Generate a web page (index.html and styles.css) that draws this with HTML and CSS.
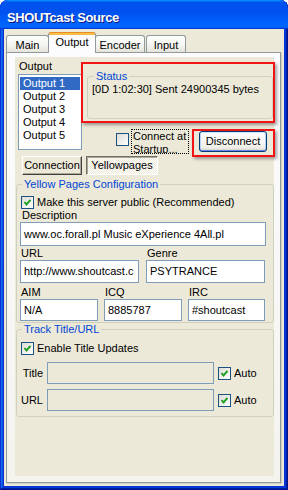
FILE: index.html
```html
<!DOCTYPE html>
<html lang="en">
<head>
    <meta charset="UTF-8">
    <meta name="viewport" content="width=device-width, initial-scale=1.0">
    <title>SHOUTcast Source</title>
    <link rel="stylesheet" href="styles.css">
</head>
<body>
    <div class="window">
        <div class="titlebar">SHOUTcast Source</div>

        <div class="client">
            <div class="tabs">
                <div class="tab tab-main">Main</div>
                <div class="tab tab-output active">Output</div>
                <div class="tab tab-encoder">Encoder</div>
                <div class="tab tab-input">Input</div>
            </div>

            <div class="pane">
                <div class="page">
                    <div class="top">
                        <div class="outputs">
                            <div class="out-label">Output</div>
                            <div class="listbox">
                                <div class="item selected">Output 1</div>
                                <div class="item">Output 2</div>
                                <div class="item">Output 3</div>
                                <div class="item">Output 4</div>
                                <div class="item">Output 5</div>
                            </div>
                        </div>

                        <div class="side">
                            <fieldset class="group status">
                                <legend>Status</legend>
                                <div class="status-text">[0D 1:02:30] Sent 24900345 bytes</div>
                            </fieldset>

                            <div class="connect-row">
                                <span class="check"></span>
                                <div class="focus-label">Connect at<br>Startup...</div>
                                <div class="button">Disconnect</div>
                            </div>
                        </div>
                    </div>

                    <div class="modes">
                        <div class="push">Connection</div>
                        <div class="push pressed">Yellowpages</div>
                    </div>

                    <fieldset class="group yp">
                        <legend>Yellow Pages Configuration</legend>
                        <div class="chk-row">
                            <span class="check on"><svg viewBox="0 0 11 11"><polyline points="2.5,5 4.5,7.5 8.5,2.8"/></svg></span>
                            <span>Make this server public (Recommended)</span>
                        </div>
                        <div class="lbl">Description</div>
                        <div class="edit desc">www.oc.forall.pl Music eXperience 4All.pl</div>

                        <div class="fields two">
                            <div class="field w119">
                                <div class="lbl">URL</div>
                                <div class="edit h23">http://www.shoutcast.c</div>
                            </div>
                            <div class="field w119">
                                <div class="lbl">Genre</div>
                                <div class="edit h23">PSYTRANCE</div>
                            </div>
                        </div>

                        <div class="fields three">
                            <div class="field w78">
                                <div class="lbl">AIM</div>
                                <div class="edit">N/A</div>
                            </div>
                            <div class="field w78">
                                <div class="lbl">ICQ</div>
                                <div class="edit">8885787</div>
                            </div>
                            <div class="field w77">
                                <div class="lbl">IRC</div>
                                <div class="edit">#shoutcast</div>
                            </div>
                        </div>
                    </fieldset>

                    <fieldset class="group track">
                        <legend>Track Title/URL</legend>
                        <div class="chk-row">
                            <span class="check on"><svg viewBox="0 0 11 11"><polyline points="2.5,5 4.5,7.5 8.5,2.8"/></svg></span>
                            <span>Enable Title Updates</span>
                        </div>

                        <div class="title-row">
                            <div class="row-label">Title</div>
                            <div class="edit disabled"></div>
                            <span class="check on"><svg viewBox="0 0 11 11"><polyline points="2.5,5 4.5,7.5 8.5,2.8"/></svg></span>
                            <span class="auto">Auto</span>
                        </div>
                        <div class="title-row second">
                            <div class="row-label">URL</div>
                            <div class="edit disabled"></div>
                            <span class="check on"><svg viewBox="0 0 11 11"><polyline points="2.5,5 4.5,7.5 8.5,2.8"/></svg></span>
                            <span class="auto">Auto</span>
                        </div>
                    </fieldset>

                    <!-- red highlight marks drawn over the dialog -->
                    <div class="mark mark-status"></div>
                    <div class="mark mark-disconnect"></div>
                </div>
            </div>
        </div>
    </div>
</body>
</html>
```

FILE: styles.css
```css
* {
    box-sizing: border-box;
}

body {
    margin: 0;
    background: #fff;
    font-family: "Liberation Sans", Arial, sans-serif;
    font-size: 11px;
    line-height: 13px;
    color: #000;
}

.window {
    width: 288px;
    height: 490px;
    background: #0831d9;
    border-radius: 8px 8px 0 0;
    box-shadow: inset -1px -1px #00138c, inset 1px 1px #0831d9,
                inset -2px -2px #001ea0, inset 2px 2px #166aee,
                inset -3px -3px #003bda, inset 3px 3px #0855dd;
    overflow: hidden;
}

.titlebar {
    height: 29px;
    padding: 10px 0 0 7px;
    line-height: 15px;
    font-size: 13px;
    font-weight: bold;
    letter-spacing: -0.4px;
    color: #fff;
    text-shadow: 1px 1px #0a1883;
    border-radius: 8px 8px 0 0;
    background: linear-gradient(180deg, #0997ff, #0053ee 8%, #0050ee 40%, #0066ff 88%, #0066ff 93%, #005bff 95%, #003dd7 96%, #003dd7);
}

.client {
    margin: 0 4px 4px;
    height: 457px;
    background: #ece9d8;
    padding-top: 3px;
}

/* tab strip */
.tabs {
    display: flex;
    align-items: flex-end;
    height: 20px;
}

.tab {
    position: relative;
    height: 17px;
    border: 1px solid #919b9c;
    border-bottom: 0;
    border-radius: 3px 3px 0 0;
    background: linear-gradient(#fff, #f3f3ef 60%, #e6e4da);
    text-align: center;
    line-height: 14px;
    padding-top: 2px;
}

.tab-main {
    width: 43px;
    margin-left: 2px;
}

.tab-output {
    width: 48px;
    height: 21px;
    margin-left: -1px;
    margin-bottom: -1px;
    z-index: 2;
    border-top-color: #e68b2c;
    background: linear-gradient(#ffc73c 0, #f9b545 2px, #fcfcfe 2px);
    padding-top: 2px;
}

.tab-encoder {
    width: 50px;
    margin-left: -1px;
}

.tab-input {
    width: 40px;
    margin-left: 1px;
}

.pane {
    position: relative;
    margin: 0 3px 0 2px;
    height: 431px;
    border: 1px solid #919b9c;
    box-shadow: 1px 1px 0 #d0cebf;
    background: linear-gradient(#fcfcfe, #f4f3ee);
    padding: 4px 5px 0 8px;
}

.page {
    position: relative;
    width: 259px;
    height: 419px;
    background: #ece9d8;
}

/* output list + status */
.top {
    display: flex;
    height: 97px;
}

.outputs {
    width: 70px;
    padding-left: 3px;
}

.out-label {
    margin: 3px 0 1px 1px;
}

.listbox {
    width: 64px;
    height: 76px;
    border: 1px solid #7f9db9;
    background: #fff;
    padding: 2px 1px;
}

.item {
    height: 13px;
    padding-left: 3px;
    white-space: nowrap;
}

.item.selected {
    background: #316ac5;
    color: #fff;
}

.side {
    flex: 1;
}

.group {
    margin: 0;
    padding: 0;
    min-width: 0;
    border: 1px solid #d0d0bf;
    border-radius: 3px;
}

.group legend {
    padding: 0 2px;
    line-height: 13px;
    color: #0046d5;
}

.status {
    width: 186px;
    height: 49px;
    margin: 13px 0 0 2px;
}

.status legend {
    margin-left: 6px;
}

.status-text {
    padding-left: 4px;
    white-space: nowrap;
}

.connect-row {
    display: flex;
    align-items: flex-start;
    margin-top: 10px;
    padding-left: 31px;
}

.check {
    display: block;
    flex: none;
    width: 13px;
    height: 13px;
    border: 1px solid #1c5180;
    background: linear-gradient(135deg, #dcdcd7, #fff);
}

.connect-row .check {
    margin-top: 4px;
}

.check svg {
    display: block;
    width: 11px;
    height: 11px;
}

.check polyline {
    fill: none;
    stroke: #21a121;
    stroke-width: 2;
}

.focus-label {
    width: 58px;
    height: 25px;
    margin-left: 2px;
    border: 1px dotted #000;
    padding-left: 1px;
    overflow: hidden;
    white-space: nowrap;
}

.button {
    width: 68px;
    height: 21px;
    margin: 2px 0 0 10px;
    border: 1px solid #003c74;
    border-radius: 3px;
    background: linear-gradient(#fff, #f0f0ea 80%, #d6d0c5);
    box-shadow: inset 0 1px #cee7ff, inset 0 -1px #6982ee, inset 1px 0 #b9d1fa, inset -1px 0 #b9d1fa;
    text-align: center;
    line-height: 19px;
}

/* connection / yellowpages switch */
.modes {
    display: flex;
    margin-top: 2px;
    padding-left: 7px;
}

.push {
    width: 60px;
    height: 19px;
    border: 1px solid;
    border-color: #fff #404040 #404040 #fff;
    box-shadow: inset -1px -1px #aca899;
    text-align: center;
    line-height: 17px;
}

.push.pressed {
    width: 72px;
    margin-left: 4px;
    border-color: #716f64 #fff #fff #716f64;
    box-shadow: inset 1px 1px #aca899;
    background: repeating-conic-gradient(#fff 0 25%, #ece9d8 0 50%) 0 0 / 2px 2px;
}

/* yellow pages group */
.yp {
    width: 258px;
    margin: 3px 0 0 1px;
    padding-bottom: 1px;
}

.yp legend,
.track legend {
    margin-left: 5px;
}

.chk-row {
    display: flex;
    align-items: center;
    gap: 3px;
    height: 13px;
    margin: 5px 0 0 4px;
}

.lbl {
    height: 13px;
    padding-left: 5px;
}

.field .lbl {
    padding-left: 1px;
}

.edit {
    height: 22px;
    border: 1px solid #7f9db9;
    background: #fff;
    padding-left: 3px;
    line-height: 20px;
    white-space: nowrap;
    overflow: hidden;
}

.edit.desc {
    width: 246px;
    height: 24px;
    margin-left: 3px;
    line-height: 22px;
}

.edit.h23 {
    height: 23px;
    line-height: 21px;
}

.fields {
    display: flex;
    margin-left: 3px;
}

.fields.two {
    gap: 7px;
    margin-top: 1px;
}

.fields.three {
    gap: 6px;
    margin-top: 3px;
}

.w119 { width: 119px; }
.w78 { width: 78px; }
.w77 { width: 77px; }

/* track title group */
.track {
    width: 258px;
    margin-left: 1px;
    padding-bottom: 5px;
}

.track .chk-row {
    margin-top: 6px;
}

.title-row {
    display: flex;
    align-items: center;
    margin-top: 7px;
}

.title-row.second {
    margin-top: 5px;
}

.row-label {
    width: 26px;
    margin-right: 4px;
    text-align: right;
}

.edit.disabled {
    width: 167px;
    background: #ece9d8;
}

.title-row .check {
    margin-left: 4px;
}

.auto {
    margin-left: 3px;
}

/* annotation boxes */
.mark {
    position: absolute;
    border: 2px solid #f01414;
    box-shadow: 2px 2px 3px rgba(0, 0, 0, 0.35);
}

.mark-status {
    left: 66px;
    top: 5px;
    width: 194px;
    height: 61px;
}

.mark-disconnect {
    left: 177px;
    top: 72px;
    width: 83px;
    height: 28px;
}
```
